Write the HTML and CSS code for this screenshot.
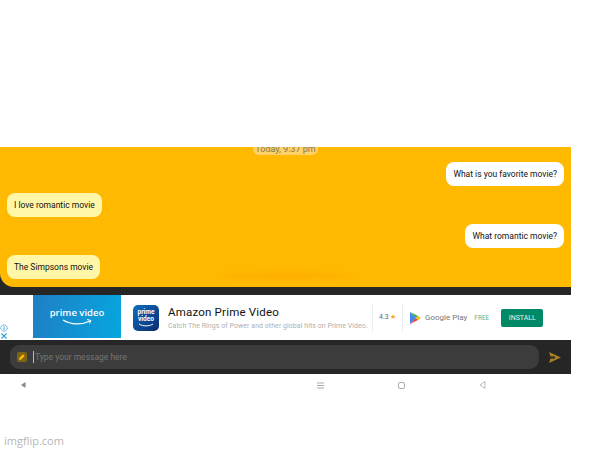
FILE: index.html

```html
<!DOCTYPE html>
<html lang="en">
<head>
  <meta charset="UTF-8">
  <title>Chat</title>
  <link rel="stylesheet" href="styles.css">
</head>
<body>
  <div class="screen">
    <div class="chat-wrap">
      <div class="chat">
        <div class="day">Today, 9:37 pm</div>
        <div class="msg mine">What is you favorite movie?</div>
        <div class="msg theirs">I love romantic movie</div>
        <div class="msg mine">What romantic movie?</div>
        <div class="msg theirs">The Simpsons movie</div>
        <div class="glow"></div>
      </div>
    </div>

    <div class="ad">
      <div class="ad-marks">
        <svg width="8" height="8" viewBox="0 0 8 8"><circle cx="4" cy="4" r="3.2" fill="none" stroke="#2aa7d8" stroke-width="1" stroke-dasharray="1.500 .7"/><rect x="3.500" y="3.400" width="1" height="2.600" fill="#2aa7d8"/><rect x="3.500" y="2" width="1" height="1" fill="#2aa7d8"/></svg>
        <svg width="8" height="8" viewBox="0 0 8 8"><path d="M1.500 1.500l5 5M6.500 1.500l-5 5" stroke="#2aa7d8" stroke-width="1.200"/></svg>
      </div>
      <div class="ad-banner">
        <span class="banner-text">prime video</span>
        <svg class="banner-smile" width="32" height="7" viewBox="0 0 32 7"><path d="M2 1c8 5 19 5 27 1" fill="none" stroke="#fff" stroke-width="1.200"/><path d="M26 .5l4 1-1.500 3" fill="none" stroke="#fff" stroke-width="1"/></svg>
      </div>
      <div class="app-icon">
        <span>prime<br>video</span>
        <svg width="16" height="4" viewBox="0 0 16 4"><path d="M1 1c4 2.500 10 2.500 14 0" fill="none" stroke="#fff" stroke-width="1"/></svg>
      </div>
      <div class="ad-copy">
        <div class="ad-title">Amazon Prime Video</div>
        <div class="ad-desc">Catch The Rings of Power and other global hits on Prime Video.</div>
      </div>
      <div class="ad-rating">4.3 <span class="star">★</span></div>
      <div class="ad-store">
        <svg width="11" height="12" viewBox="0 0 11 12"><path d="M0 0l6 6-6 6z" fill="#4285f4"/><path d="M0 0l8 4-2 2z" fill="#34a853"/><path d="M0 12l8-4-2-2z" fill="#ea4335"/><path d="M8 4l3 2-3 2-2-2z" fill="#fbbc04"/></svg>
        <span>Google Play</span>
      </div>
      <div class="ad-free">FREE</div>
      <div class="ad-install">INSTALL</div>
    </div>

    <div class="composer">
      <div class="input">
        <span class="pencil">
          <svg width="8" height="8" viewBox="0 0 8 8"><path d="M1 7l.5-2.200L5 1.300 6.700 3 3.200 6.500z" fill="#ffb900"/></svg>
        </span>
        <span class="caret"></span>
        <span class="placeholder">Type your message here</span>
      </div>
      <svg class="send" width="12" height="11" viewBox="0 0 12 11"><path d="M0 0l12 5.500L0 11l1.500-4.500H6v-2H1.500z" fill="#a8811d"/></svg>
    </div>

    <div class="nav">
      <svg width="5" height="6" viewBox="0 0 5 6"><path d="M4.500 0v6L0 3z" fill="#888"/></svg>
      <div class="nav-right">
        <svg width="7" height="7" viewBox="0 0 7 7"><path d="M0 1h7M0 3.500h7M0 6h7" stroke="#aaa" stroke-width="1"/></svg>
        <svg width="7" height="7" viewBox="0 0 7 7"><rect x=".5" y=".5" width="6" height="6" rx="1.500" fill="none" stroke="#aaa"/></svg>
        <svg width="7" height="8" viewBox="0 0 7 8"><path d="M6 .5v7L1 4z" fill="none" stroke="#aaa" stroke-width=".8"/></svg>
      </div>
    </div>
  </div>

  <div class="watermark">imgflip.com</div>
</body>
</html>
```

FILE: styles.css

```css
html, body {
  height: 100%;
}
body {
  margin: 0;
  background-color: #fff;
  font-family: Roboto, "Liberation Sans", sans-serif;
  overflow: hidden;
  position: relative;
}
.screen {
  width: 571px;
  padding-top: 147px;
}
.chat-wrap {
  background-color: #262626;
  padding-bottom: 8px;
}
.chat {
  height: 140px;
  box-sizing: border-box;
  background-color: #ffb900;
  border-bottom-left-radius: 14px;
  display: flex;
  flex-direction: column;
  gap: 7px;
  position: relative;
  overflow: hidden;
  padding: 15px 7px 0;
}
.day {
  position: absolute;
  top: -4px;
  left: 253px;
  width: 65px;
  height: 12px;
  border-radius: 6px;
  background-color: #ffd166;
  color: #8a7a50;
  font-size: 9px;
  line-height: 12px;
  text-align: center;
}
.msg {
  height: 24px;
  line-height: 24px;
  border-radius: 8px;
  font-size: 8.5px;
  padding: 0 7px;
  color: #111;
  width: fit-content;
}
.mine {
  background-color: #fff;
  align-self: flex-end;
}
.theirs {
  background-color: #fff6a8;
  align-self: flex-start;
}
.glow {
  position: absolute;
  bottom: 10px;
  left: 222px;
  width: 130px;
  height: 3px;
  border-radius: 50%;
  background-color: #ffa600;
  filter: blur(2px);
}
.ad {
  height: 45px;
  display: flex;
  align-items: center;
  background-color: #fff;
}
.ad-marks {
  width: 33px;
  height: 100%;
  display: flex;
  flex-direction: column;
  justify-content: flex-end;
  box-sizing: border-box;
}
.ad-banner {
  width: 88px;
  height: 43px;
  margin-bottom: 2px;
  background: linear-gradient(100deg, #1f7fc4, #06a6e0);
  display: flex;
  flex-direction: column;
  align-items: center;
  justify-content: center;
  color: #fff;
}
.banner-text {
  font-family: "Open Sans", sans-serif;
  font-size: 9.500px;
  font-weight: 600;
  line-height: 11px;
}
.banner-smile {
  margin-top: 1px;
}
.app-icon {
  width: 26px;
  height: 26px;
  margin-left: 12px;
  border-radius: 5px;
  background: linear-gradient(135deg, #0f6fc0, #0a2a70);
  color: #fff;
  font-size: 6.500px;
  font-weight: bold;
  line-height: 7px;
  text-align: center;
  display: flex;
  flex-direction: column;
  align-items: center;
  justify-content: center;
}
.ad-copy {
  margin-left: 9px;
  width: 204px;
  height: 28px;
  border-right: 1px solid #eee;
}
.ad-title {
  font-size: 11.500px;
  line-height: 16px;
  color: #111;
  letter-spacing: 0.2px;
}
.ad-desc {
  font-size: 7px;
  line-height: 12px;
  color: #b0b0b0;
  white-space: nowrap;
  letter-spacing: 0.05px;
}
.ad-rating {
  width: 30px;
  height: 28px;
  border-right: 1px solid #eee;
  font-size: 7px;
  line-height: 26px;
  color: #666;
  padding-left: 6px;
  box-sizing: border-box;
}
.star {
  color: #f5a623;
}
.ad-store {
  display: flex;
  align-items: center;
  gap: 4px;
  margin-left: 7px;
  font-size: 8px;
  color: #777;
}
.ad-free {
  margin-left: 7px;
  font-size: 6.500px;
  color: #4fb89c;
}
.ad-install {
  margin-left: 12px;
  width: 42px;
  height: 18px;
  border-radius: 2px;
  background-color: #008966;
  color: #e6f3ef;
  font-size: 7px;
  line-height: 18px;
  text-align: center;
}
.composer {
  height: 34px;
  background-color: #262626;
  display: flex;
  align-items: center;
  padding: 0 10px;
  gap: 10px;
}
.input {
  flex: 1;
  height: 24px;
  border-radius: 9px;
  background-color: #3c3c3c;
  display: flex;
  align-items: center;
  padding-left: 7px;
}
.pencil {
  width: 10px;
  height: 10px;
  border-radius: 2px;
  background-color: #7f6414;
  display: flex;
  align-items: center;
  justify-content: center;
}
.caret {
  width: 1px;
  height: 12px;
  margin-left: 6px;
  background-color: #bbb;
}
.placeholder {
  font-size: 8.500px;
  color: #757575;
  margin-left: 1px;
}
.nav {
  height: 22px;
  display: flex;
  align-items: center;
  padding-left: 21px;
}
.nav-right {
  margin-left: 291px;
  display: flex;
  align-items: center;
  gap: 74px;
}
.watermark {
  position: absolute;
  left: 4px;
  bottom: 2px;
  font-family: "Open Sans", sans-serif;
  font-size: 11px;
  color: #b5b5b5;
}
```
